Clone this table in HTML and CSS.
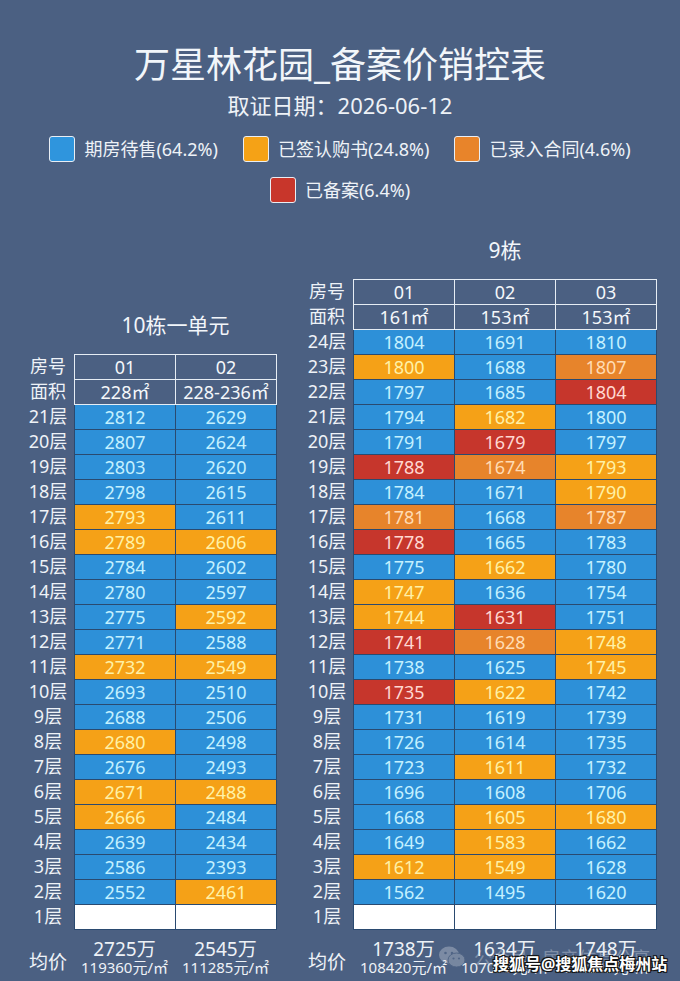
FILE: index.html
```html
<!DOCTYPE html>
<html lang="zh-CN">
<head>
<meta charset="utf-8">
<title>万星林花园_备案价销控表</title>
<link rel="stylesheet" href="styles.css">
</head>
<body>
<div class="page">
  <header class="top">
    <h1 class="title">万星林花园_备案价销控表</h1>
    <div class="subtitle">取证日期：2026-06-12</div>
    <div class="legend">
      <div class="lrow">
        <div class="litem"><span class="sw sw-b"></span><span>期房待售(64.2%)</span></div>
        <div class="litem"><span class="sw sw-y"></span><span>已签认购书(24.8%)</span></div>
        <div class="litem"><span class="sw sw-o"></span><span>已录入合同(4.6%)</span></div>
      </div>
      <div class="lrow">
        <div class="litem"><span class="sw sw-r"></span><span>已备案(6.4%)</span></div>
      </div>
    </div>
  </header>

  <main class="main">
    <section class="block">
      <div class="btitle">10栋一单元</div>
      <div class="tbl">
        <div class="labels">
          <div>房号</div><div>面积</div>
          <div>21层</div><div>20层</div><div>19层</div><div>18层</div><div>17层</div><div>16层</div><div>15层</div><div>14层</div><div>13层</div><div>12层</div><div>11层</div><div>10层</div><div>9层</div><div>8层</div><div>7层</div><div>6层</div><div>5层</div><div>4层</div><div>3层</div><div>2层</div><div>1层</div>
        </div>
        <div class="cols">
          <div class="head c2">
            <div>01</div><div>02</div>
            <div>228㎡</div><div>228-236㎡</div>
          </div>
          <div class="data c2">
            <div class="b">2812</div><div class="b">2629</div>
            <div class="b">2807</div><div class="b">2624</div>
            <div class="b">2803</div><div class="b">2620</div>
            <div class="b">2798</div><div class="b">2615</div>
            <div class="y">2793</div><div class="b">2611</div>
            <div class="y">2789</div><div class="y">2606</div>
            <div class="b">2784</div><div class="b">2602</div>
            <div class="b">2780</div><div class="b">2597</div>
            <div class="b">2775</div><div class="y">2592</div>
            <div class="b">2771</div><div class="b">2588</div>
            <div class="y">2732</div><div class="y">2549</div>
            <div class="b">2693</div><div class="b">2510</div>
            <div class="b">2688</div><div class="b">2506</div>
            <div class="y">2680</div><div class="b">2498</div>
            <div class="b">2676</div><div class="b">2493</div>
            <div class="y">2671</div><div class="y">2488</div>
            <div class="y">2666</div><div class="b">2484</div>
            <div class="b">2639</div><div class="b">2434</div>
            <div class="b">2586</div><div class="b">2393</div>
            <div class="b">2552</div><div class="y">2461</div>
            <div class="w"></div><div class="w"></div>
          </div>
        </div>
      </div>
      <div class="avg">
        <div class="avlbl">均价</div>
        <div class="avcell"><div class="tot">2725万</div><div class="unit">119360元/㎡</div></div>
        <div class="avcell"><div class="tot">2545万</div><div class="unit">111285元/㎡</div></div>
      </div>
    </section>

    <section class="block">
      <div class="btitle">9栋</div>
      <div class="tbl">
        <div class="labels">
          <div>房号</div><div>面积</div>
          <div>24层</div><div>23层</div><div>22层</div><div>21层</div><div>20层</div><div>19层</div><div>18层</div><div>17层</div><div>16层</div><div>15层</div><div>14层</div><div>13层</div><div>12层</div><div>11层</div><div>10层</div><div>9层</div><div>8层</div><div>7层</div><div>6层</div><div>5层</div><div>4层</div><div>3层</div><div>2层</div><div>1层</div>
        </div>
        <div class="cols">
          <div class="head c3">
            <div>01</div><div>02</div><div>03</div>
            <div>161㎡</div><div>153㎡</div><div>153㎡</div>
          </div>
          <div class="data c3">
            <div class="b">1804</div><div class="b">1691</div><div class="b">1810</div>
            <div class="y">1800</div><div class="b">1688</div><div class="o">1807</div>
            <div class="b">1797</div><div class="b">1685</div><div class="r">1804</div>
            <div class="b">1794</div><div class="y">1682</div><div class="b">1800</div>
            <div class="b">1791</div><div class="r">1679</div><div class="b">1797</div>
            <div class="r">1788</div><div class="o">1674</div><div class="y">1793</div>
            <div class="b">1784</div><div class="b">1671</div><div class="y">1790</div>
            <div class="o">1781</div><div class="b">1668</div><div class="o">1787</div>
            <div class="r">1778</div><div class="b">1665</div><div class="b">1783</div>
            <div class="b">1775</div><div class="y">1662</div><div class="b">1780</div>
            <div class="y">1747</div><div class="b">1636</div><div class="b">1754</div>
            <div class="y">1744</div><div class="r">1631</div><div class="b">1751</div>
            <div class="r">1741</div><div class="o">1628</div><div class="y">1748</div>
            <div class="b">1738</div><div class="b">1625</div><div class="y">1745</div>
            <div class="r">1735</div><div class="y">1622</div><div class="b">1742</div>
            <div class="b">1731</div><div class="b">1619</div><div class="b">1739</div>
            <div class="b">1726</div><div class="b">1614</div><div class="b">1735</div>
            <div class="b">1723</div><div class="y">1611</div><div class="b">1732</div>
            <div class="b">1696</div><div class="b">1608</div><div class="b">1706</div>
            <div class="b">1668</div><div class="y">1605</div><div class="y">1680</div>
            <div class="b">1649</div><div class="y">1583</div><div class="b">1662</div>
            <div class="y">1612</div><div class="y">1549</div><div class="b">1628</div>
            <div class="b">1562</div><div class="b">1495</div><div class="b">1620</div>
            <div class="w"></div><div class="w"></div><div class="w"></div>
          </div>
        </div>
      </div>
      <div class="avg">
        <div class="avlbl">均价</div>
        <div class="avcell"><div class="tot">1738万</div><div class="unit">108420元/㎡</div></div>
        <div class="avcell"><div class="tot">1634万</div><div class="unit">107059元/㎡</div></div>
        <div class="avcell"><div class="tot">1748万</div><div class="unit">114248元/㎡</div></div>
      </div>
    </section>
  </main>

  <div class="wm-faint">
    <svg class="wechat" width="28" height="24" viewBox="0 0 28 24">
      <ellipse cx="11" cy="10" rx="10" ry="8.5" fill="#d8dde4"/>
      <circle cx="7.5" cy="8" r="1.3" fill="#5a6f8e"/>
      <circle cx="14" cy="8" r="1.3" fill="#5a6f8e"/>
      <ellipse cx="18.5" cy="15" rx="8.5" ry="7" fill="#c9d0da" stroke="#5a6f8e" stroke-width="1"/>
      <circle cx="15.5" cy="13.5" r="1.1" fill="#5a6f8e"/>
      <circle cx="21" cy="13.5" r="1.1" fill="#5a6f8e"/>
    </svg>
    <span>公众号 · 房产信息分享</span>
  </div>
  <div class="wm">搜狐号@搜狐焦点梅州站</div>
</div>
</body>
</html>
```

FILE: styles.css
```css
* { box-sizing: border-box; }
html, body { margin: 0; padding: 0; }
body {
  background: #4b6082;
  font-family: "Noto Sans", "Noto Sans CJK SC", sans-serif;
  color: #eef2f7;
  width: 680px;
  height: 981px;
  overflow: hidden;
}
.page { position: relative; width: 680px; height: 981px; }

.top { padding-top: 45px; text-align: center; }
.title {
  margin: 0;
  font-size: 36px;
  line-height: 40px;
  font-weight: 400;
  color: #f2f6fa;
}
.subtitle {
  margin-top: 7px;
  font-size: 22px;
  line-height: 26px;
  color: #eef2f7;
}
.legend {
  margin-top: 18px;
  display: flex;
  flex-direction: column;
  gap: 15px;
}
.lrow { display: flex; justify-content: center; gap: 25px; }
.litem {
  display: flex;
  align-items: center;
  gap: 9px;
  font-size: 18px;
  line-height: 26px;
  color: #eef2f7;
}
.sw {
  width: 26px;
  height: 26px;
  border: 1.5px solid #e9eef4;
  border-radius: 3px;
}
.sw-b { background: #2f95dd; }
.sw-y { background: #f5a216; }
.sw-o { background: #e8842a; }
.sw-r { background: #c8362b; }

.main {
  margin-top: 32px;
  padding-left: 22px;
  display: flex;
  align-items: flex-end;
  gap: 24px;
}
.block { display: flex; flex-direction: column; }
.btitle {
  padding-left: 52px;
  text-align: center;
  font-size: 21px;
  line-height: 30px;
  margin-bottom: 14px;
  color: #f2f6fa;
}
.tbl { display: flex; }
.labels { width: 52px; display: flex; flex-direction: column; }
.labels div {
  height: 25px;
  line-height: 25px;
  text-align: center;
  font-size: 18px;
  color: #eef2f7;
}
.cols { display: flex; flex-direction: column; }
.head, .data {
  display: grid;
  grid-auto-rows: 24px;
  gap: 1px;
}
.c2 { grid-template-columns: repeat(2, 100px); }
.c3 { grid-template-columns: repeat(3, 100px); }
.head {
  background: #e6edf4;
  padding: 1px;
}
.head div {
  background: #4b6082;
  text-align: center;
  font-size: 18px;
  line-height: 24px;
  color: #f4f7fa;
}
.data {
  background: #2a4a70;
  padding: 0 1px 1px 1px;
}
.data div {
  text-align: center;
  font-size: 18px;
  line-height: 24px;
}
.b { background: #2d90d8; color: #c4f1ff; }
.y { background: #f5a117; color: #fff1a6; }
.o { background: #e7842b; color: #ffdcb4; }
.r { background: #c6362c; color: #ffd8d2; }
.w { background: #ffffff; }

.avg {
  display: flex;
  align-items: center;
  margin-top: 10px;
  height: 36px;
}
.avlbl {
  width: 52px;
  text-align: center;
  font-size: 19px;
  line-height: 24px;
  padding-top: 8px;
  color: #eef2f7;
}
.avcell {
  width: 101px;
  text-align: center;
  color: #eef2f7;
}
.avcell:first-of-type { margin-left: 1px; }
.tot { font-size: 19px; line-height: 19px; }
.unit { font-size: 15px; line-height: 17px; }

.wm-faint {
  position: absolute;
  left: 438px;
  top: 944px;
  display: flex;
  align-items: center;
  gap: 8px;
  opacity: 0.35;
  font-size: 18px;
  color: #dfe5ec;
}
.wm {
  position: absolute;
  left: 493px;
  top: 953px;
  font-size: 16px;
  line-height: 22px;
  font-weight: 700;
  color: #ffffff;
  text-shadow: -1px -1px 0 #111, 1px -1px 0 #111, -1px 1px 0 #111, 1px 1px 0 #111, 0 0 2px #000;
}
```
